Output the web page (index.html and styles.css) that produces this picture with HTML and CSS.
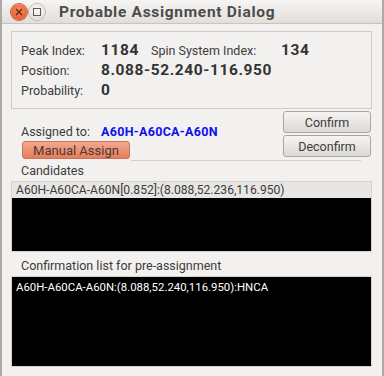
FILE: index.html
```html
<!DOCTYPE html>
<html lang="en">
<head>
    <meta charset="UTF-8">
    <title>Probable Assignment Dialog</title>
    <link rel="stylesheet" href="styles.css">
</head>
<body>
<div class="window">
    <div class="titlebar">
        <span class="wbtn close">
            <svg width="8" height="8" viewBox="0 0 8 8"><path d="M1 1L7 7M7 1L1 7" stroke="#5a2a18" stroke-width="1.4"/></svg>
        </span>
        <span class="wbtn max">
            <svg width="8" height="8" viewBox="0 0 8 8"><rect x="0.5" y="0.5" width="7" height="7" fill="none" stroke="#5c5b57" stroke-width="1"/></svg>
        </span>
        <span class="title">Probable Assignment Dialog</span>
    </div>

    <div class="content">
        <div class="group">
            <span class="label">Peak Index:</span>
            <span class="value">1184</span>
            <span class="label">Spin System Index:</span>
            <span class="value">134</span>

            <span class="label">Position:</span>
            <span class="value span3">8.088-52.240-116.950</span>

            <span class="label">Probability:</span>
            <span class="value span3">0</span>
        </div>

        <div class="assign">
            <div class="assign-left">
                <div class="assigned-row">
                    <span class="label">Assigned to:</span>
                    <span class="assigned">A60H-A60CA-A60N</span>
                </div>
                <button class="btn manual">Manual Assign</button>
            </div>
            <div class="assign-right">
                <button class="btn">Confirm</button>
                <button class="btn">Deconfirm</button>
            </div>
        </div>
        <div class="separator"></div>

        <div class="section-label">Candidates</div>
        <div class="list candidates">
            <div class="row selected">A60H-A60CA-A60N[0.852]:(8.088,52.236,116.950)</div>
        </div>

        <div class="section-label confirm-label">Confirmation list for pre-assignment</div>
        <div class="list confirmations">
            <div class="row">A60H-A60CA-A60N:(8.088,52.240,116.950):HNCA</div>
        </div>
    </div>
</div>
</body>
</html>
```

FILE: styles.css
```css
html, body {
    margin: 0;
    padding: 0;
}

body {
    width: 384px;
    height: 376px;
    overflow: hidden;
    background: #f2f1f0;
    font-family: Roboto, "Noto Sans", sans-serif;
    font-size: 12.5px;
    color: #3c3c3c;
}

.window {
    height: 376px;
    box-sizing: border-box;
    border-left: 2px solid #aeaaa3;
    border-right: 2px solid #aeaaa3;
}

.titlebar {
    height: 23px;
    display: flex;
    align-items: center;
    background: linear-gradient(#f6f5f3, #e2dfda);
    border-bottom: 1px solid #c9c5be;
    padding-left: 9px;
}

.wbtn {
    width: 16px;
    height: 16px;
    border-radius: 50%;
    display: flex;
    align-items: center;
    justify-content: center;
    margin-right: 2px;
}

.close {
    background: radial-gradient(circle at 50% 35%, #f58c5e, #e0532a);
    box-shadow: 0 0 0 1px #c7583a;
}

.max {
    background: radial-gradient(circle at 50% 35%, #faf9f7, #dcd9d3);
    box-shadow: 0 0 0 1px #b9b5ad;
}

.title {
    margin-left: 12px;
    font-weight: bold;
    font-size: 15.5px;
    letter-spacing: 0.7px;
    color: #4c4c4c;
}

.content {
    padding: 7px 10px 0 9px;
}

.group {
    height: 78px;
    box-sizing: border-box;
    border: 1px solid #cfccc7;
    padding: 8px 0 0 9px;
    display: grid;
    grid-template-columns: 80px 50px 130px auto;
    grid-auto-rows: 20px;
    align-items: center;
}

.label {
    font-size: 12.5px;
    color: #3c3c3c;
}

.value {
    font-weight: bold;
    font-size: 15.5px;
    letter-spacing: 0.6px;
    color: #333333;
}

.span3 {
    grid-column: span 3;
}

.assign {
    display: flex;
    justify-content: space-between;
    margin-top: 2px;
    padding-left: 10px;
    padding-right: 1px;
}

.assigned-row {
    display: flex;
    margin-top: 11px;
    height: 18px;
    align-items: center;
}

.assigned-row .label {
    width: 80px;
}

.assigned {
    font-weight: bold;
    font-size: 12.5px;
    letter-spacing: 0.3px;
    color: #1010ee;
}

.btn {
    display: block;
    font-family: inherit;
    font-size: 12.5px;
    color: #3c3c3c;
    border: 1px solid #a9a59f;
    border-radius: 3px;
    background: linear-gradient(#f6f5f3, #dcd9d4);
    padding: 0;
}

.assign-right .btn {
    width: 88px;
    height: 22px;
    margin-bottom: 2px;
}

.manual {
    margin-top: 1px;
    margin-left: 1px;
    width: 108px;
    height: 18px;
    font-size: 13px;
    background: linear-gradient(#f4a88d, #e77c5c);
    border-color: #c9755b;
    color: #4a3a35;
}

.separator {
    height: 1px;
    background: #d2cfca;
    margin: 1px 11px 0 120px;
}

.section-label {
    font-size: 12.5px;
    padding-left: 10px;
    margin-top: 1px;
    height: 18px;
    line-height: 18px;
}

.list {
    margin-top: 1px;
    background: #000000;
    border: 1px solid #d6d3ce;
    box-sizing: border-box;
}

.candidates {
    height: 71px;
}

.confirmations {
    height: 91px;
}

.confirm-label {
    margin-top: 5px;
}

.row {
    height: 16px;
    line-height: 16px;
    padding-left: 4px;
    font-size: 12.1px;
    color: #ffffff;
    white-space: nowrap;
}

.row.selected {
    background: #e8e6e3;
    color: #3c3c3c;
}

.confirmations .row {
    margin-top: 2px;
    font-size: 11.4px;
}
```
